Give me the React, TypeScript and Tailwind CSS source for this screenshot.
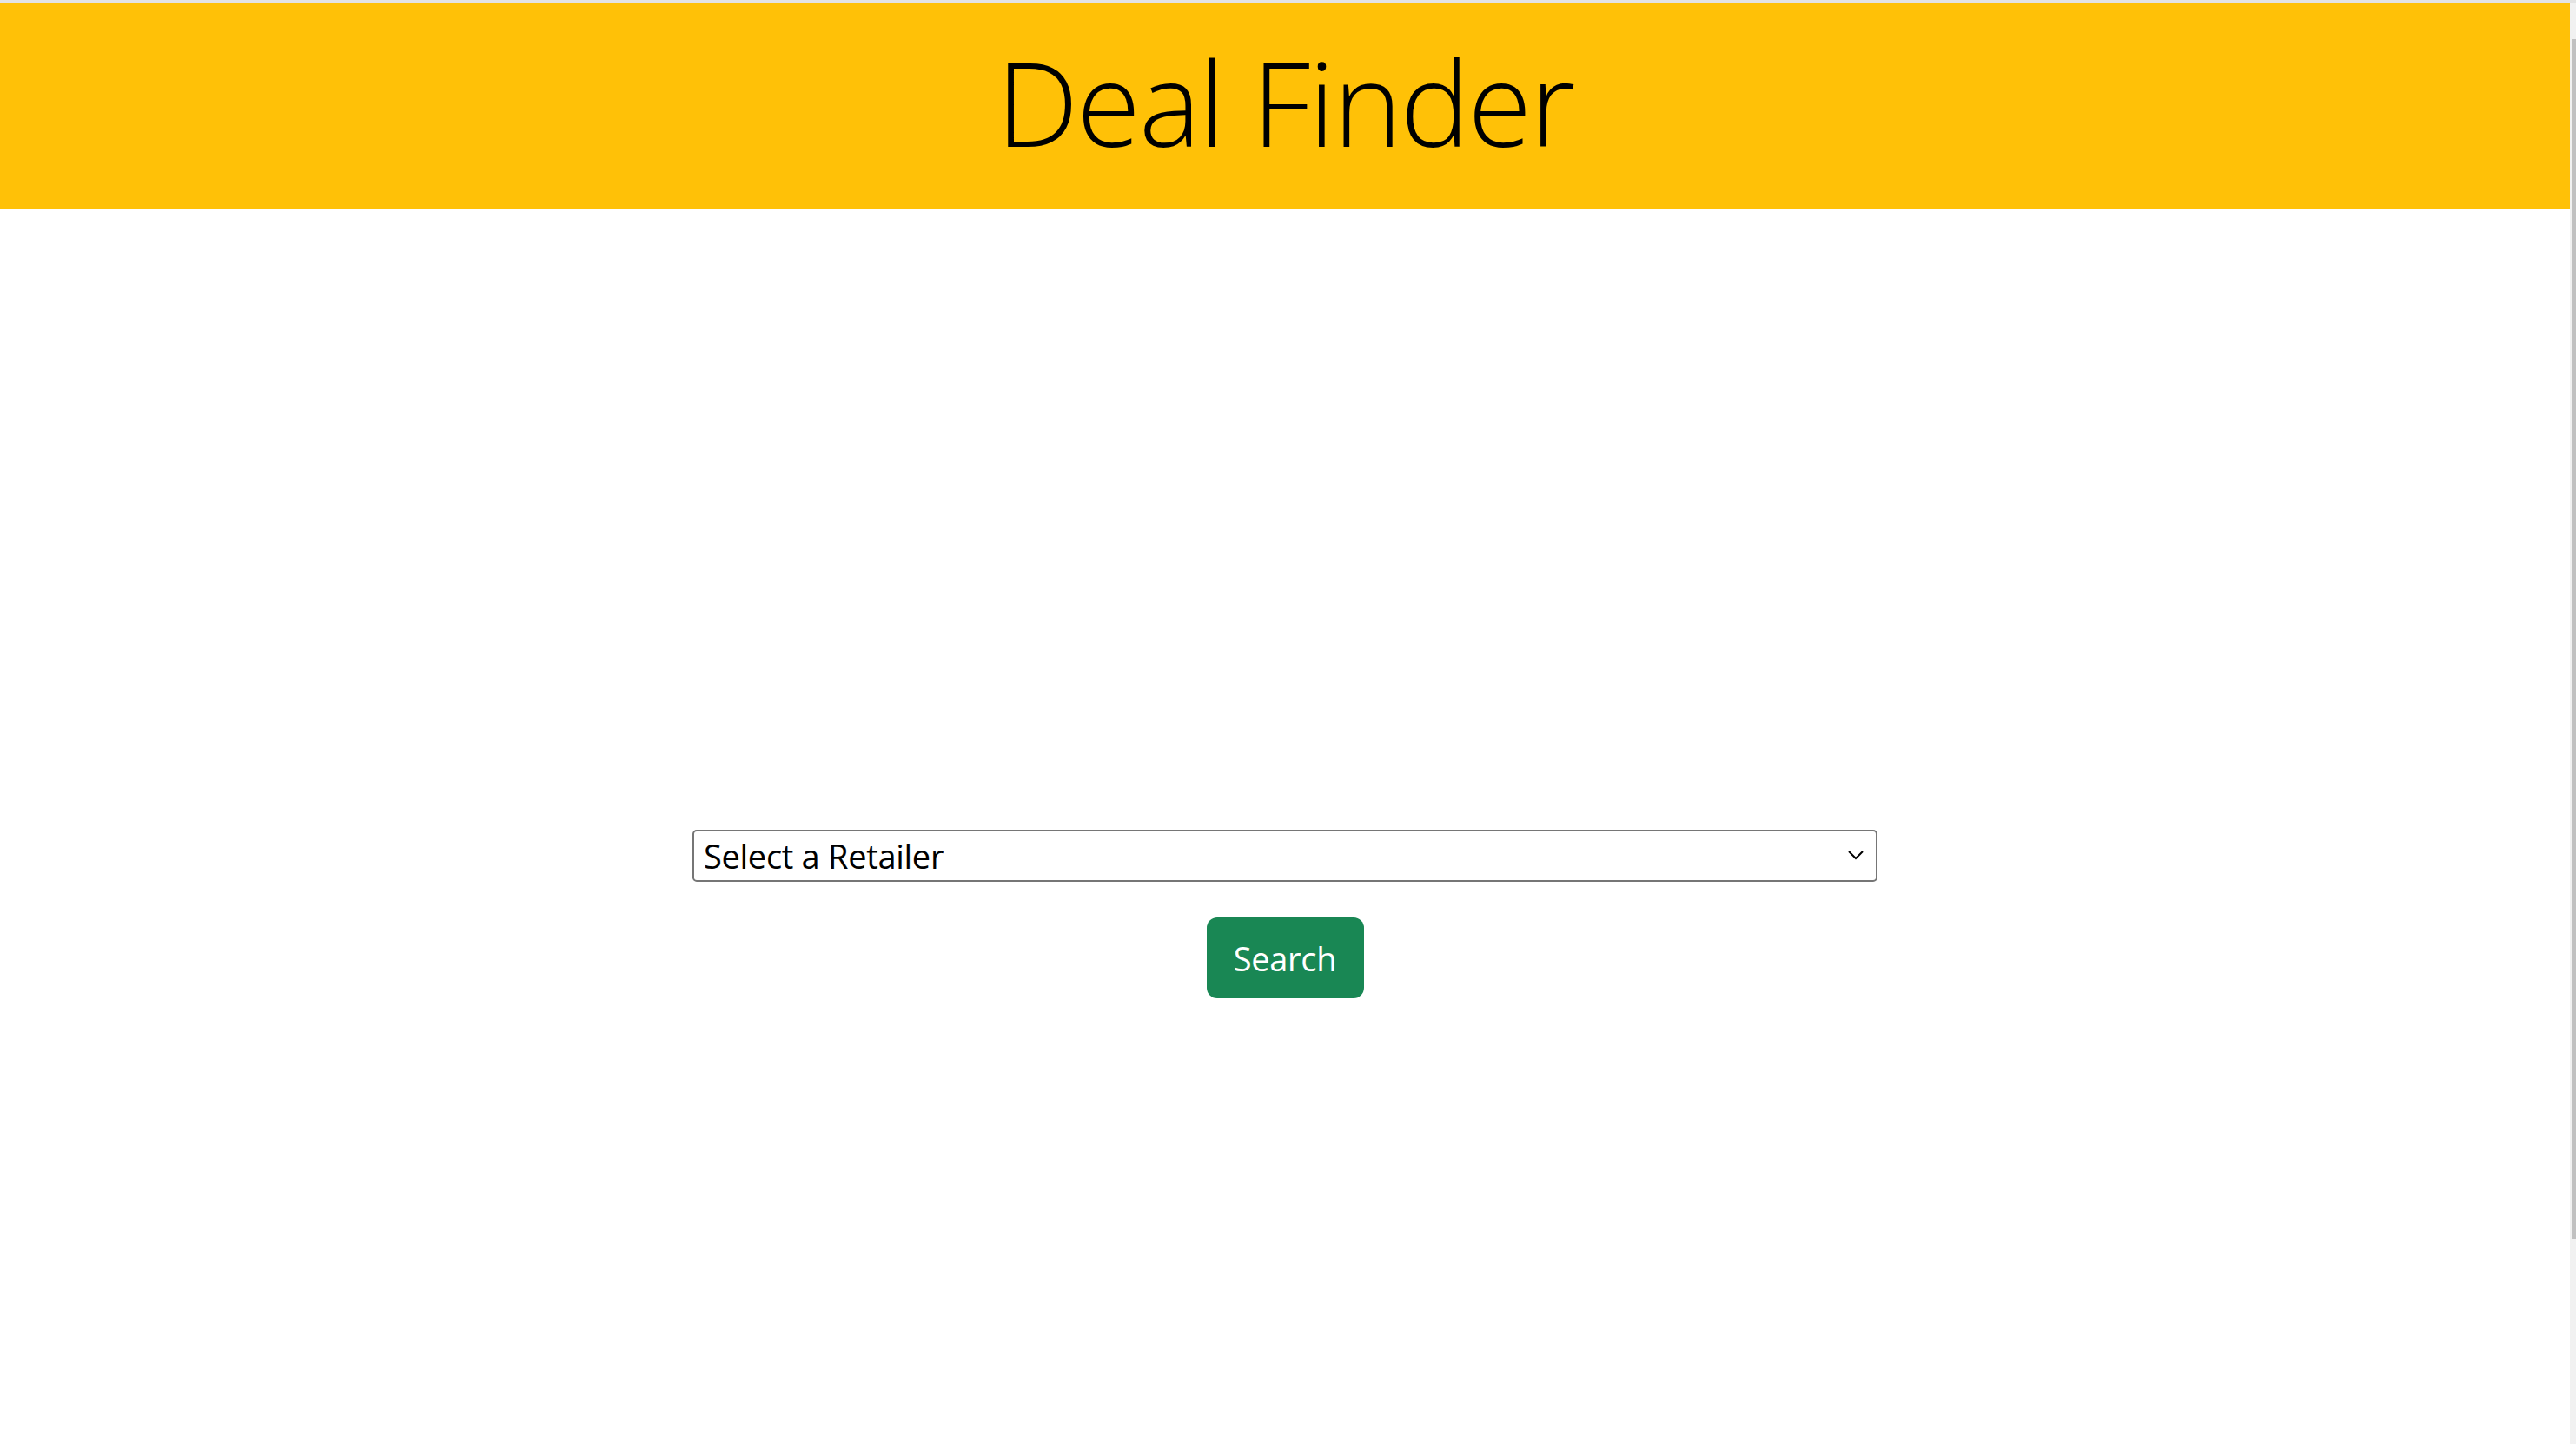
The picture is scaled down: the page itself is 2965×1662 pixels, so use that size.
import React from 'react';

const retailers = ['Select a Retailer', 'Amazon', 'Best Buy', 'Target', 'Walmart'];

const App: React.FC = () => {
    return (
        <div className="w-full h-[1662px] flex flex-col overflow-hidden bg-white font-['Open_Sans',sans-serif]">
            <div className="h-[3px] w-full bg-[#e3e3e3]" />
            <div className="flex flex-1">
                <div className="flex-1 flex flex-col">
                    <header className="h-[238px] bg-[#ffc107] flex items-center justify-center">
                        <h1 className="text-[134px] font-light leading-none text-black tracking-[-2px] pb-[10px]">Deal Finder</h1>
                    </header>
                    <main className="flex flex-col items-center pt-[714px]">
                        <div className="relative w-[1364px]">
                            <select
                                defaultValue={retailers[0]}
                                className="appearance-none w-full h-[60px] border-2 border-[#767676] rounded-[5px] bg-white pl-[11px] text-[38px] tracking-[-0.3px] text-black outline-none"
                            >
                                {retailers.map((r) => (
                                    <option key={r} value={r}>{r}</option>
                                ))}
                            </select>
                            <svg
                                className="absolute right-[16px] top-[24px] pointer-events-none"
                                width="18"
                                height="11"
                                viewBox="0 0 18 11"
                                fill="none"
                            >
                                <polyline points="1,1 9,9 17,1" stroke="#000" strokeWidth="2" />
                            </svg>
                        </div>
                        <button className="mt-[41px] w-[181px] h-[93px] rounded-[12px] bg-[#198754] text-white text-[38px] tracking-[-0.3px] flex items-center justify-center pt-[2px]">
                            Search
                        </button>
                    </main>
                </div>
                <div className="w-[7px] bg-[#f1f1f1] pt-[42px] flex justify-end">
                    <div className="w-[5px] h-[1381px] bg-[#c1c1c1]" />
                </div>
            </div>
        </div>
    );
};

export default App;
